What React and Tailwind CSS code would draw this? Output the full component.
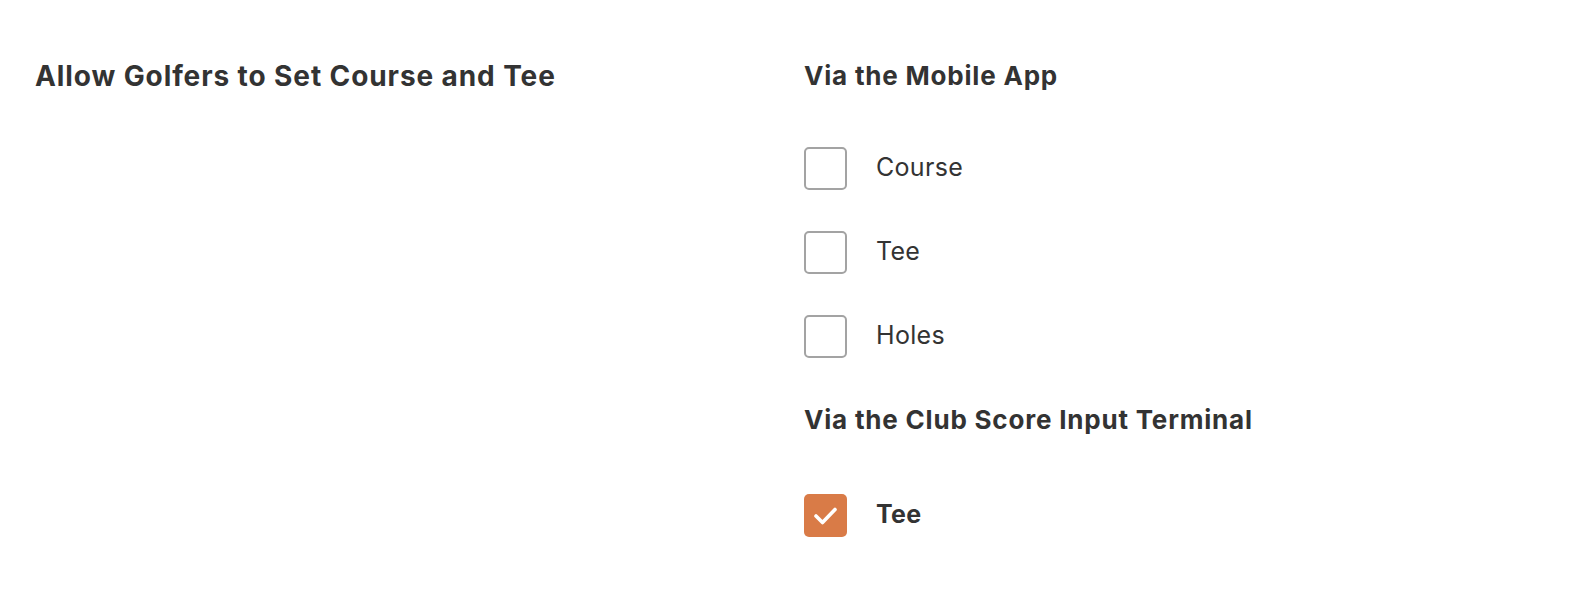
import React from 'react'

function Box({ checked }) {
  if (checked) {
    return (
      <span className="block w-[43px] h-[43px] rounded-[5px] bg-[#d97b47]">
        <svg width="43" height="43" viewBox="0 0 43 43" fill="none" stroke="white" strokeWidth="3.6" strokeLinecap="round" strokeLinejoin="round">
          <path d="M12 22l6.5 6.5 12.5-13" />
        </svg>
      </span>
    )
  }
  return <span className="block w-[43px] h-[43px] rounded-[5px] border-2 border-[#a3a3a3] bg-white" />
}

function Option({ label, checked }) {
  return (
    <label className="flex items-center h-[43px] gap-[29px]">
      <Box checked={checked} />
      <span className={`text-[25px] leading-[30px] tracking-[0.3px] pb-[4px] text-[#333] ${checked ? 'font-bold' : 'font-normal'}`}>{label}</span>
    </label>
  )
}

export default function App() {
  const mobile = ['Course', 'Tee', 'Holes']

  return (
    <div className="min-h-[596px] bg-white font-['Inter',sans-serif] text-[#333] flex pl-[35px] pt-[59px]">
      <div className="w-[769px]">
        <h2 className="text-[28px] font-bold leading-[34px] tracking-[0.9px]">Allow Golfers to Set Course and Tee</h2>
      </div>
      <div>
        <h3 className="text-[26px] font-bold leading-[34px] tracking-[0.8px]">Via the Mobile App</h3>
        <div className="flex flex-col gap-[41px] mt-[54px]">
          {mobile.map(m => (
            <Option key={m} label={m} />
          ))}
        </div>
        <h3 className="text-[26px] font-bold leading-[34px] tracking-[0.8px] mt-[45px]">Via the Club Score Input Terminal</h3>
        <div className="mt-[57px]">
          <Option label="Tee" checked />
        </div>
      </div>
    </div>
  )
}
